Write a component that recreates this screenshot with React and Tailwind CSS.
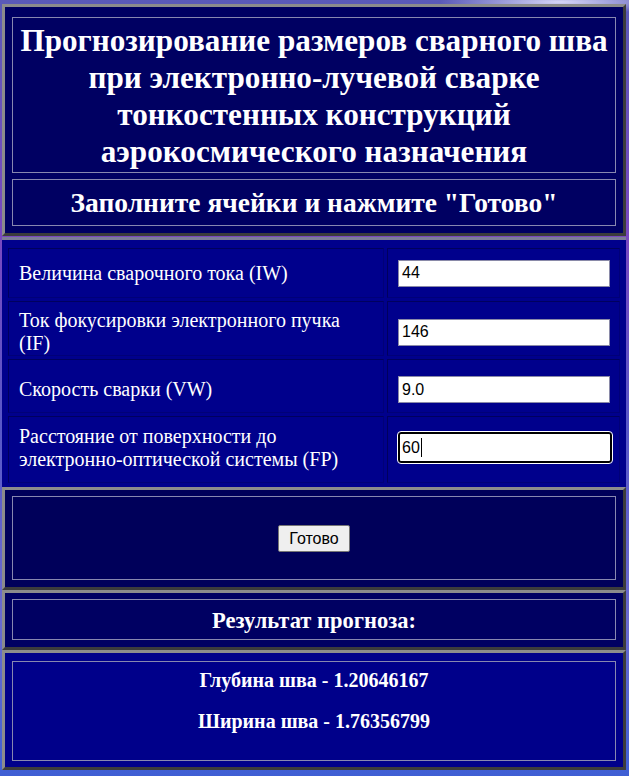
import React from "react";

const serif = { fontFamily: '"Liberation Serif", "Times New Roman", serif' };
const sans = { fontFamily: '"Liberation Sans", Arial, sans-serif' };

function Field({ label, value, h, shift, focused }) {
  return (
    <div className="grid grid-cols-[376px_1fr] gap-[3px]">
      <div className={`flex items-center border border-t-[#00005e] border-l-[#00005e] border-r-[#000078] border-b-[#000078] pl-[10px] pr-[4px] text-white text-[20px] leading-[23px] ${h} ${shift}`} style={serif}>
        <span>{label}</span>
      </div>
      <div className={`flex items-center border border-t-[#00005e] border-l-[#00005e] border-r-[#000078] border-b-[#000078] pl-[10px] ${h} ${shift}`}>
        {focused ? (
          <div className="w-[214px] h-[31px] rounded-[3px] border-2 border-black bg-white outline outline-1 outline-white flex items-center pl-[2px] text-[16px] text-black" style={sans}>
            {value}
            <span className="inline-block w-[1px] h-[19px] bg-black ml-[1px]" />
          </div>
        ) : (
          <div className="w-[212px] h-[27px] border border-[#8a8aa8] bg-white flex items-center pl-[3px] text-[16px] text-black" style={sans}>
            {value}
          </div>
        )}
      </div>
    </div>
  );
}

export default function App() {
  return (
    <div
      className="w-[629px] min-h-[776px] pt-[4px] pl-[2px] flex flex-col"
      style={{
        background:
          "radial-gradient(ellipse 120px 12px at 560px 2px, rgba(230,230,255,0.9), rgba(230,230,255,0) 100%), linear-gradient(to bottom, #5a5ab8 0%, #7a48c0 30%, #5858c8 55%, #6a6ad0 80%, #3f5fd4 100%)",
      }}
    >
      {/* Title table */}
      <div className="w-[624px] border-[3px] border-t-[#8c8c8c] border-l-[#8c8c8c] border-r-[#3c3c3c] border-b-[#3c3c3c] bg-[#000062] pt-[10px] pb-[7px] px-[7px] flex flex-col gap-[6px]">
        <div className="border border-[#8888b0] h-[156px] flex items-center justify-center">
          <h1 className="text-white text-[31.2px] font-bold leading-[37px] text-center whitespace-nowrap pt-[2px]" style={serif}>
            Прогнозирование размеров сварного шва
            <br />
            при электронно-лучевой сварке
            <br />
            тонкостенных конструкций
            <br />
            аэрокосмического назначения
          </h1>
        </div>
        <div className="border border-[#8888b0] h-[47px] flex items-center justify-center">
          <h2 className="text-white text-[27.5px] font-bold leading-[30px] text-center whitespace-nowrap" style={serif}>
            Заполните ячейки и нажмите "Готово"
          </h2>
        </div>
      </div>

      {/* Inputs table */}
      <div className="mt-[1px] w-[624px] border-t-[3px] border-t-[#7c7c98] bg-[#00008c] pt-[8px] pb-[4px] px-[6px] flex flex-col gap-[3px]">
        <Field label="Величина сварочного тока (IW)" value="44" h="h-[50px]" shift="" />
        <Field
          label={<>Ток фокусировки электронного пучка<br />(IF)</>}
          value="146"
          h="h-[55px]"
          shift="pt-[7px]"
        />
        <Field label="Скорость сварки (VW)" value="9.0" h="h-[54px]" shift="pt-[7px]" />
        <Field
          label={<>Расстояние от поверхности до<br />электронно-оптической системы (FP)</>}
          value="60"
          h="h-[67px]"
          shift="pb-[4px]"
          focused
        />
      </div>

      {/* Button table */}
      <div className="w-[624px] border-[3px] border-t-[#8c8c8c] border-l-[#8c8c8c] border-r-[#3c3c3c] border-b-[#3c3c3c] bg-[#00005a] pt-[6px] pb-[7px] px-[7px]">
        <div className="border border-[#8888b0] h-[84px] flex items-center justify-center">
          <button className="mt-[1px] h-[27px] px-[10px] bg-[#efefef] border border-[#767676] rounded-[2px] text-[16px] text-black leading-none" style={sans}>
            Готово
          </button>
        </div>
      </div>

      {/* Result header */}
      <div className="w-[624px] border-[3px] border-t-[#8c8c8c] border-l-[#8c8c8c] border-r-[#3c3c3c] border-b-[#3c3c3c] bg-[#000062] pt-[6px] pb-[7px] px-[7px]">
        <div className="border border-[#8888b0] h-[41px] flex items-center justify-center pt-[3px]">
          <h3 className="text-white text-[22.5px] font-bold text-center" style={serif}>
            Результат прогноза:
          </h3>
        </div>
      </div>

      {/* Results */}
      <div className="w-[624px] border-[3px] border-t-[#8c8c8c] border-l-[#8c8c8c] border-r-[#3c3c3c] border-b-[#3c3c3c] bg-[#00008a] pt-[8px] pb-[6px] px-[7px]">
        <div className="border border-[#8888b0] h-[100px] flex flex-col items-center pt-[7px] gap-[18px] text-white text-[20px] font-bold leading-[23px]" style={serif}>
          <div>Глубина шва - 1.20646167</div>
          <div>Ширина шва - 1.76356799</div>
        </div>
      </div>
    </div>
  );
}
